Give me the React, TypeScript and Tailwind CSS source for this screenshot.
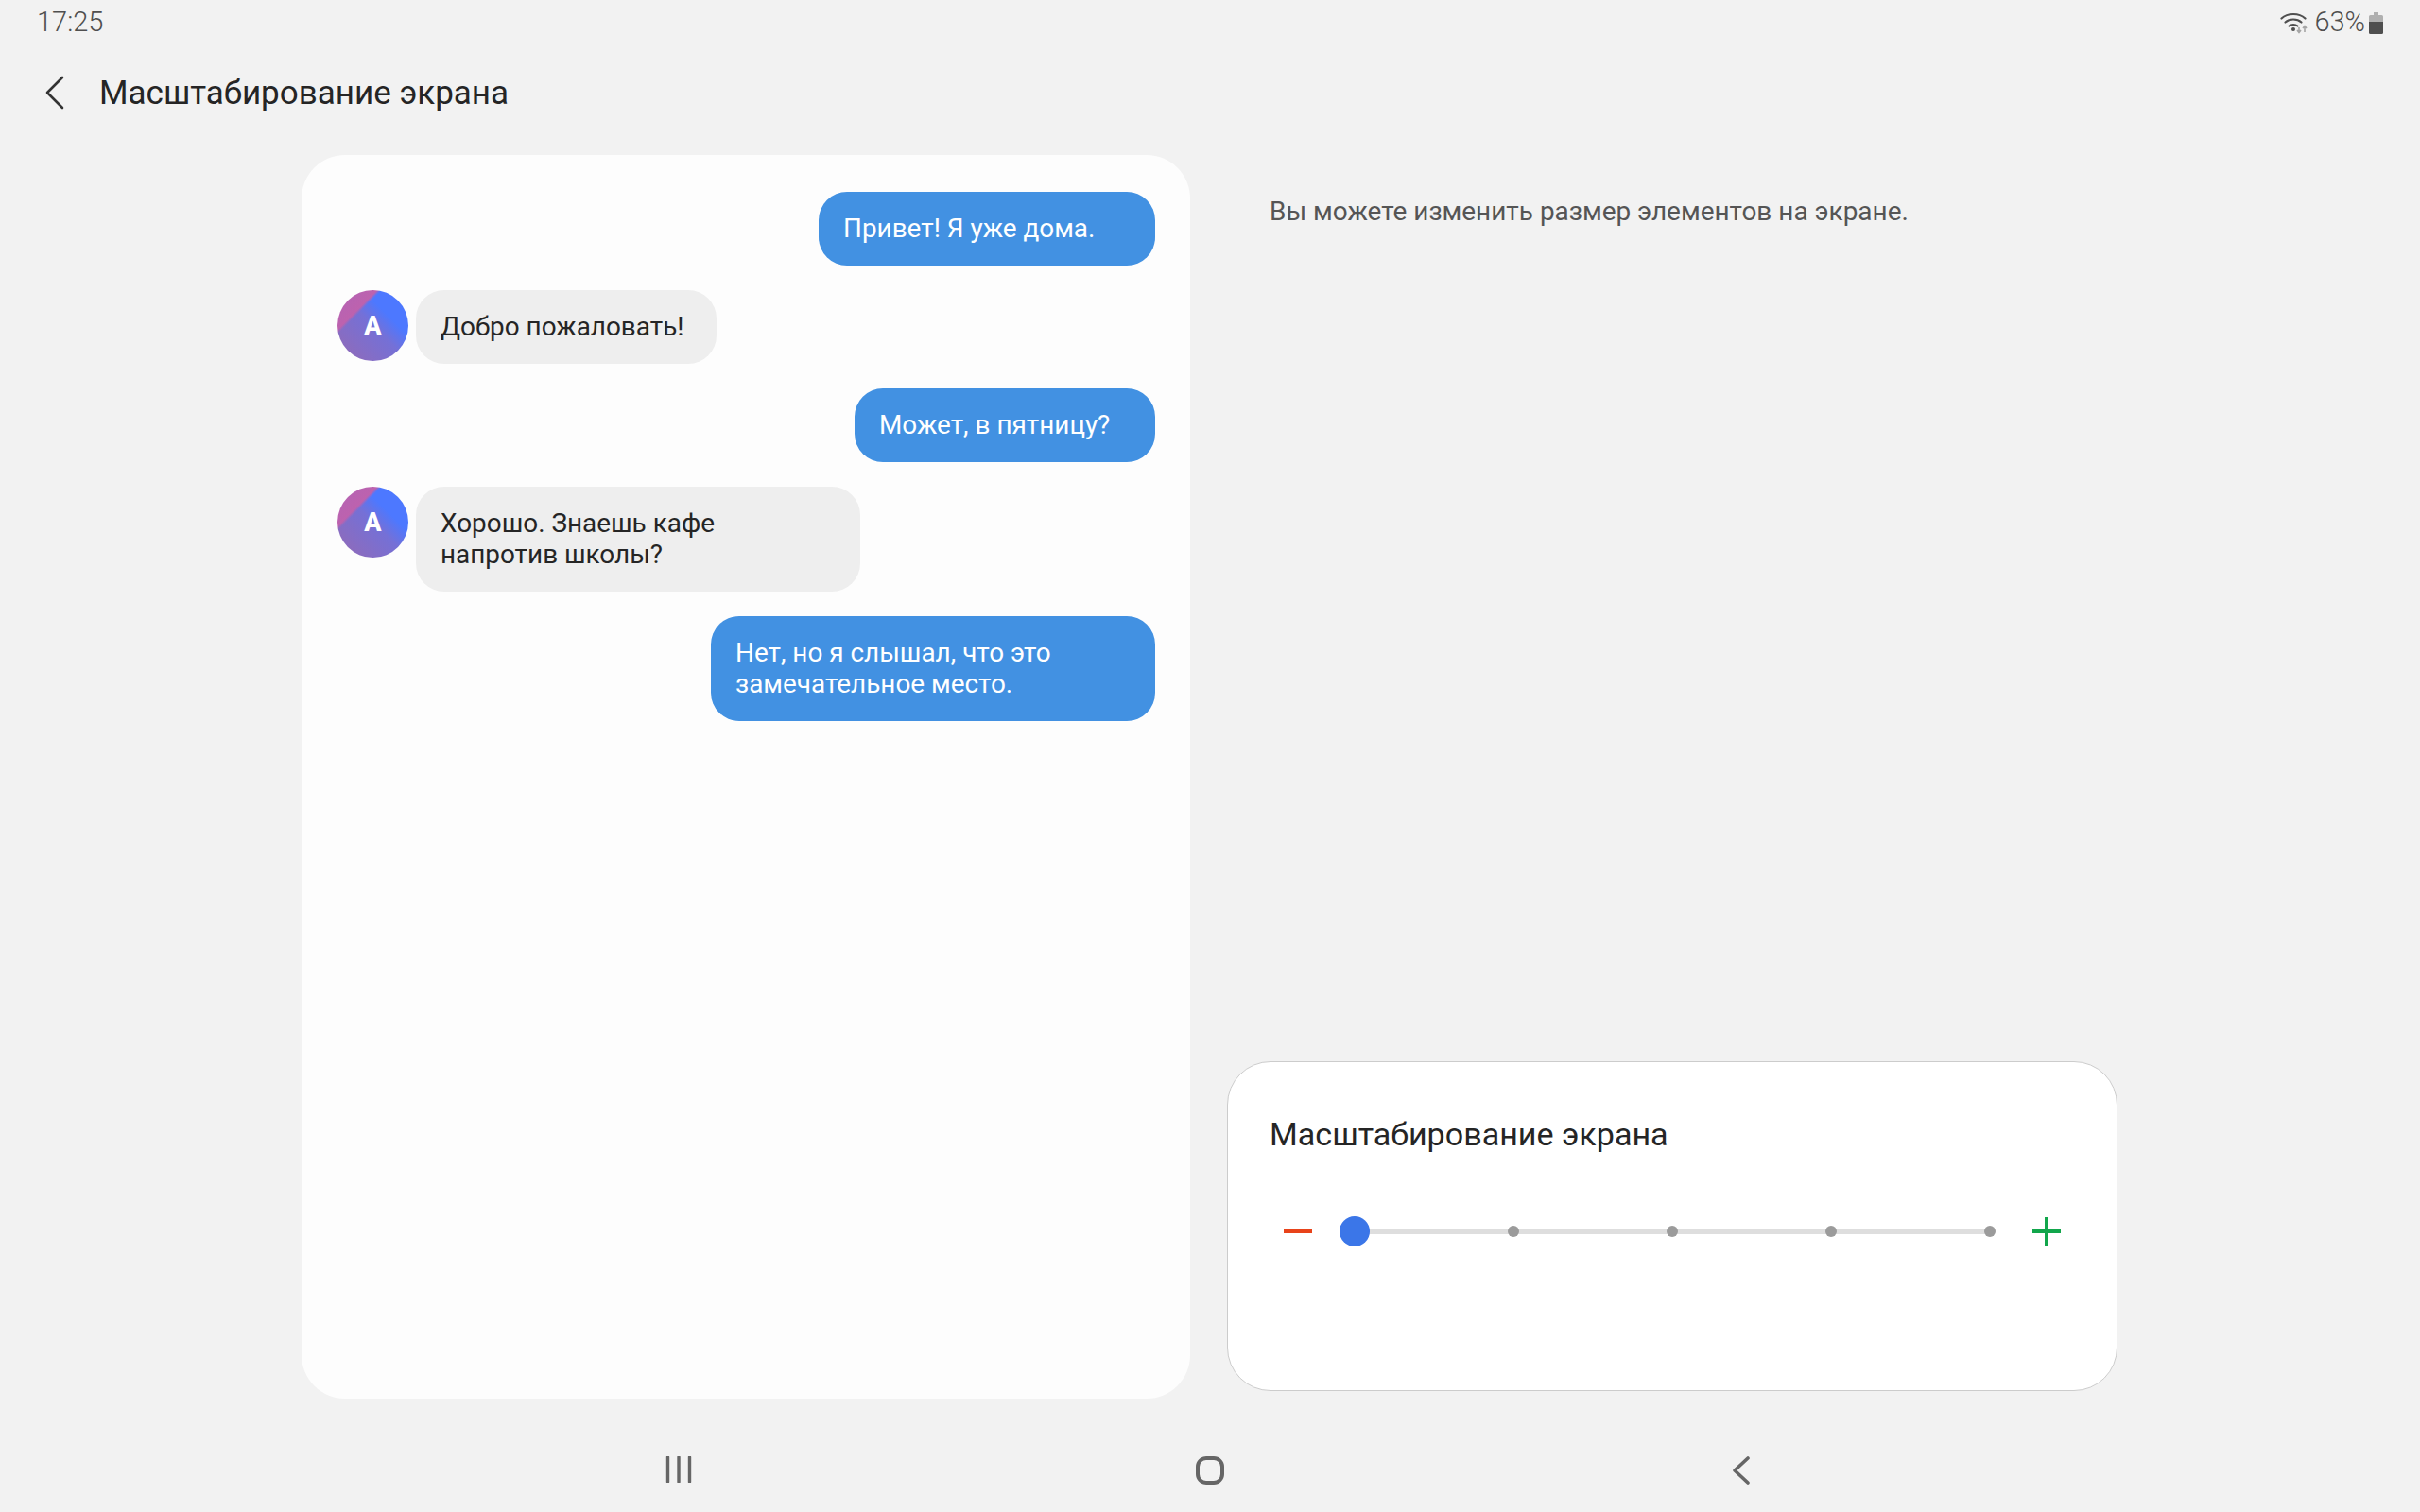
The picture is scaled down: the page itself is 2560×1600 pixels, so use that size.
const rob = "font-['Roboto',sans-serif]";

function Blue({ w, lines }: { w: string; lines: string[] }) {
  return (
    <div className={`self-end rounded-[30px] bg-[#4291e2] pb-[23px] pl-[26px] pt-[22px] text-[27.9px] leading-[33px] text-white ${w}`}>
      {lines.map((l) => (
        <div key={l}>{l}</div>
      ))}
    </div>
  );
}

function Avatar() {
  return (
    <div className="flex h-[75px] w-[75px] shrink-0 items-center justify-center rounded-full bg-[linear-gradient(135deg,#b264b6_0%,#bd62ae_28%,transparent_31%),linear-gradient(45deg,#8f6bba_8%,#7570d6_50%,#4d78ff_68%)] pt-[2px] text-[27px] font-extrabold text-white">
      A
    </div>
  );
}

function Gray({ w, lines }: { w: string; lines: string[] }) {
  return (
    <div className="flex items-start gap-[8px]">
      <Avatar />
      <div className={`rounded-[30px] bg-[#eeeeee] pb-[23px] pl-[26px] pt-[22px] text-[27.9px] leading-[33px] text-[#252525] ${w}`}>
        {lines.map((l) => (
          <div key={l}>{l}</div>
        ))}
      </div>
    </div>
  );
}

function Stop({ big }: { big?: boolean }) {
  return (
    <div className="relative flex h-[32px] w-0 items-center justify-center">
      <div className={big ? "h-[32px] w-[32px] shrink-0 rounded-full bg-[#3b76e8]" : "h-[12px] w-[12px] shrink-0 rounded-full bg-[#9b9b9b]"} />
    </div>
  );
}

export default function App() {
  return (
    <div className={`flex h-[1600px] w-[2560px] flex-col overflow-hidden bg-[#f2f2f2] ${rob}`}>
      {/* status bar */}
      <div className="flex h-[46px] items-center justify-between pl-[39px] pr-[39px] pt-[2px] text-[29px] text-[#4f4f4f]">
        <span className="font-light">17:25</span>
        <div className="flex items-center">
          <svg width="30" height="24" viewBox="0 0 30 24" className="mr-[6px]" fill="none">
            <path d="M1.5 7.5C8 1.5 20 1.5 26.5 7.5" stroke="#4f4f4f" strokeWidth="2.2" strokeLinecap="round" />
            <path d="M5.5 11.5C10 7.5 18 7.5 22.5 11.5" stroke="#4f4f4f" strokeWidth="2.2" strokeLinecap="round" />
            <path d="M9.5 15.5C12 13.5 16 13.5 18.5 15.5" stroke="#4f4f4f" strokeWidth="2.2" strokeLinecap="round" />
            <circle cx="14" cy="19" r="2" fill="#4f4f4f" />
            <path d="M20 17v5M18 20l2 2.5 2-2.5" stroke="#a5a5a5" strokeWidth="1.6" />
            <path d="M26 22v-6M24 18l2-2.5 2 2.5" stroke="#a5a5a5" strokeWidth="1.6" />
          </svg>
          <span className="font-light">63%</span>
          <svg width="15" height="23" viewBox="0 0 15 23" className="ml-[4px]">
            <path d="M5 0h5v3h3.5a1.5 1.5 0 0 1 1.5 1.5V10H0V4.5A1.5 1.5 0 0 1 1.5 3H5z" fill="#b0b0b0" />
            <path d="M0 10h15v11.5a1.5 1.5 0 0 1-1.5 1.5h-12A1.5 1.5 0 0 1 0 21.5z" fill="#4f4f4f" />
          </svg>
        </div>
      </div>

      {/* header */}
      <div className="mt-[22px] flex h-[60px] items-center pl-[47px]">
        <svg width="22" height="36" viewBox="0 0 22 36" fill="none">
          <path d="M19 2L3 18L19 34" stroke="#333333" strokeWidth="2.6" strokeLinecap="round" strokeLinejoin="round" />
        </svg>
        <span className="ml-[36px] pt-[2px] text-[35px] text-[#252525]">Масштабирование экрана</span>
      </div>

      {/* content */}
      <div className="mt-[36px] flex flex-1 gap-[39px] pl-[319px]">
        <div className="flex h-[1316px] w-[940px] flex-col gap-[26px] rounded-[46px] bg-[#fdfdfd] pl-[38px] pr-[37px] pt-[39px]">
          <Blue w="w-[356px]" lines={["Привет! Я уже дома."]} />
          <Gray w="w-[318px]" lines={["Добро пожаловать!"]} />
          <Blue w="w-[318px]" lines={["Может, в пятницу?"]} />
          <Gray w="w-[470px]" lines={["Хорошо. Знаешь кафе", "напротив школы?"]} />
          <Blue w="w-[470px]" lines={["Нет, но я слышал, что это", "замечательное место."]} />
        </div>

        <div className="flex h-[1308px] w-[942px] flex-col justify-between">
          <p className="pl-[45px] pt-[41px] text-[27.95px] leading-[38px] text-[#555555]">
            Вы можете изменить размер элементов на экране.
          </p>
          <div className="h-[349px] rounded-[46px] border border-[#cccccc] bg-white pl-[44px] pt-[54px]">
            <div className="text-[34.1px] leading-[44px] text-[#252525]">Масштабирование экрана</div>
            <div className="mt-[65px] flex items-center">
              <div className="ml-[15px] h-[4px] w-[30px] bg-[#e8431a]" />
              <div className="relative ml-[45px] flex w-[672px] items-center justify-between">
                <div className="absolute inset-x-0 h-[6px] bg-[#dedede]" />
                <Stop big />
                <Stop />
                <Stop />
                <Stop />
                <Stop />
              </div>
              <svg width="30" height="30" viewBox="0 0 30 30" className="ml-[45px]">
                <path d="M0 15H30M15 0V30" stroke="#12a64c" strokeWidth="4" />
              </svg>
            </div>
          </div>
        </div>
      </div>

      {/* navigation */}
      <div className="flex h-[120px] items-start justify-center pt-[61px]">
        <div className="flex w-[562px] justify-center">
          <svg width="28" height="28" viewBox="0 0 28 28">
            <path d="M2.5 1V27M14 1V27M25.5 1V27" stroke="#666666" strokeWidth="3.4" strokeLinecap="round" />
          </svg>
        </div>
        <div className="flex w-[562px] justify-center">
          <div className="h-[30px] w-[30px] rounded-[11px] border-[4px] border-[#666666]" />
        </div>
        <div className="flex w-[562px] justify-center">
          <svg width="20" height="30" viewBox="0 0 20 30" fill="none">
            <path d="M17 2L3 15L17 28" stroke="#666666" strokeWidth="3.6" strokeLinecap="round" strokeLinejoin="round" />
          </svg>
        </div>
      </div>
    </div>
  );
}
